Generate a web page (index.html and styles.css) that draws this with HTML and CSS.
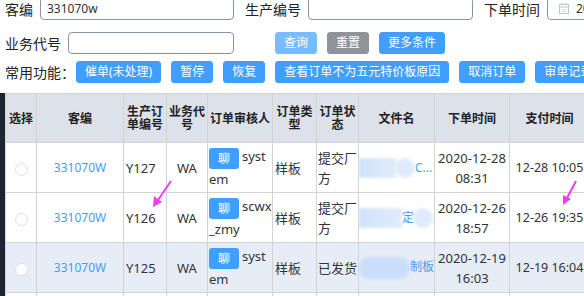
FILE: index.html
```html
<!DOCTYPE html>
<html lang="zh-CN">
<head>
    <meta charset="UTF-8">
    <title>订单列表</title>
    <link rel="stylesheet" href="styles.css">
</head>
<body>
    <div class="filters">
        <div class="filter-row first">
            <label class="f-label">客编</label>
            <input class="f-input w-code" value="331070w">
            <label class="f-label">生产编号</label>
            <input class="f-input w-prod">
            <label class="f-label">下单时间</label>
            <div class="f-date">
                <svg class="cal" width="10" height="11" viewBox="0 0 10 11">
                    <rect x="0.5" y="1.5" width="9" height="9" fill="none" stroke="#c0c4cc"/>
                    <line x1="0.5" y1="4" x2="9.5" y2="4" stroke="#c0c4cc"/>
                    <line x1="3" y1="0" x2="3" y2="2" stroke="#c0c4cc"/>
                    <line x1="7" y1="0" x2="7" y2="2" stroke="#c0c4cc"/>
                    <line x1="2.5" y1="6.5" x2="7.5" y2="6.5" stroke="#dcdfe6"/>
                    <line x1="2.5" y1="8.5" x2="7.5" y2="8.5" stroke="#dcdfe6"/>
                </svg>
                <span>2020-12-01</span>
            </div>
        </div>
        <div class="filter-row">
            <label class="f-label">业务代号</label>
            <input class="f-input w-biz">
            <div class="btn-group search">
                <button class="btn light">查询</button>
                <button class="btn gray">重置</button>
                <button class="btn">更多条件</button>
            </div>
        </div>
        <div class="filter-row">
            <label class="f-label tools">常用功能：</label>
            <div class="btn-group">
                <button class="btn">催单(未处理)</button>
                <button class="btn">暂停</button>
                <button class="btn">恢复</button>
                <button class="btn">查看订单不为五元特价板原因</button>
                <button class="btn">取消订单</button>
                <button class="btn">审单记录</button>
            </div>
        </div>
    </div>

    <div class="table-wrap">
        <table class="grid">
            <colgroup>
                <col style="width:31px">
                <col style="width:87px">
                <col style="width:43px">
                <col style="width:41px">
                <col style="width:65px">
                <col style="width:44px">
                <col style="width:42px">
                <col style="width:76px">
                <col style="width:75px">
                <col style="width:80px">
            </colgroup>
            <thead>
                <tr>
                    <th>选择</th>
                    <th>客编</th>
                    <th>生产订单编号</th>
                    <th>业务代号</th>
                    <th>订单审核人</th>
                    <th>订单类型</th>
                    <th>订单状态</th>
                    <th>文件名</th>
                    <th>下单时间</th>
                    <th>支付时间</th>
                </tr>
            </thead>
            <tbody>
                <tr>
                    <td class="c"><span class="radio"></span></td>
                    <td class="c"><a class="link">331070W</a></td>
                    <td>Y127</td>
                    <td class="c">WA</td>
                    <td class="checker"><button class="chat">聊</button>system</td>
                    <td>样板</td>
                    <td class="status">提交厂方</td>
                    <td class="fname">
                        <span class="blob" style="width:37px"></span><span class="blob round"></span><a class="link">C...</a>
                    </td>
                    <td class="c">2020-12-28<br>08:31</td>
                    <td class="c pay">12-28 10:05</td>
                </tr>
                <tr>
                    <td class="c"><span class="radio"></span></td>
                    <td class="c"><a class="link">331070W</a></td>
                    <td>Y126</td>
                    <td class="c">WA</td>
                    <td class="checker"><button class="chat">聊</button>scwx_zmy</td>
                    <td>样板</td>
                    <td class="status">提交厂方</td>
                    <td class="fname">
                        <span class="blob" style="width:43px"></span><a class="link">定</a><span class="blob round"></span><a class="link">反</a>
                    </td>
                    <td class="c">2020-12-26<br>18:57</td>
                    <td class="c pay">12-26 19:35</td>
                </tr>
                <tr class="hover">
                    <td class="c"><span class="radio"></span></td>
                    <td class="c"><a class="link">331070W</a></td>
                    <td>Y125</td>
                    <td class="c">WA</td>
                    <td class="checker"><button class="chat">聊</button>system</td>
                    <td>样板</td>
                    <td class="status">已发货</td>
                    <td class="fname">
                        <span class="blob wide" style="width:51px"></span><a class="link">制板</a>
                    </td>
                    <td class="c">2020-12-19<br>16:03</td>
                    <td class="c pay">12-19 16:04</td>
                </tr>
                <tr>
                    <td></td><td></td><td></td><td></td>
                    <td class="checker"><button class="chat">聊</button></td>
                    <td></td><td></td><td></td><td></td><td></td>
                </tr>
            </tbody>
        </table>
    </div>

    <svg class="marks" width="584" height="296" viewBox="0 0 584 296">
        <line x1="171" y1="181" x2="158" y2="200" stroke="#f53cf0" stroke-width="2"/>
        <polygon points="153,207 162,202 154,196" fill="#f53cf0"/>
        <line x1="576" y1="181" x2="567" y2="198" stroke="#f53cf0" stroke-width="2"/>
        <polygon points="563,205 571,199 563,195" fill="#f53cf0"/>
    </svg>
</body>
</html>
```

FILE: styles.css
```css
body {
    margin: 0;
    font-family: "Noto Sans", "Noto Sans CJK SC", sans-serif;
    color: #333;
    overflow: hidden;
    position: relative;
    height: 296px;
}
.filters {
    padding-left: 5px;
    margin-top: -3px;
}
.filter-row {
    display: flex;
    align-items: center;
    height: 22px;
    margin-top: 7px;
    white-space: nowrap;
}
.filter-row > * {
    flex-shrink: 0;
}
.filter-row.first {
    height: 23px;
    margin-top: 0;
    margin-bottom: 12px;
}
.f-label {
    font-size: 14px;
    color: #222;
    margin-right: 7px;
}
.f-label.tools {
    margin-right: 1px;
}
.f-input {
    height: 100%;
    box-sizing: border-box;
    border: 1px solid #8a92a6;
    border-radius: 4px;
    padding: 0 6px;
    font-family: inherit;
    font-size: 12px;
    color: #333;
    margin-right: 11px;
    outline: none;
}
.w-code { width: 194px; }
.w-prod { width: 165px; }
.w-biz { width: 166px; }
.f-date {
    height: 100%;
    box-sizing: border-box;
    width: 120px;
    border: 1px solid #8a92a6;
    border-radius: 4px;
    display: flex;
    align-items: center;
    padding-left: 11px;
    font-size: 12px;
    gap: 7px;
}
.btn-group {
    display: flex;
    gap: 10px;
    height: 100%;
}
.btn-group > * {
    flex-shrink: 0;
}
.btn-group.search {
    margin-left: 30px;
}
.btn {
    height: 100%;
    padding: 0 8px;
    border: 1px solid #409eff;
    border-radius: 3px;
    background-color: #409eff;
    color: white;
    font-family: inherit;
    font-size: 12px;
    line-height: 1;
    cursor: pointer;
}
.btn.light {
    background-color: #79bbff;
    border-color: #79bbff;
}
.btn.gray {
    background-color: #909399;
    border-color: #909399;
}
.table-wrap {
    margin-top: 10px;
    border-left: 5px solid #1e2431;
    height: 300px;
}
.grid {
    border-collapse: collapse;
    table-layout: fixed;
    width: 584px;
}
.grid th, .grid td {
    border: 1px solid #d3d3d3;
}
.grid thead tr {
    height: 49px;
}
.grid tbody tr {
    height: 50px;
}
.grid th {
    background-color: #dde1ea;
    font-size: 12px;
    line-height: 13px;
    font-weight: bold;
    color: #222;
    padding: 0 1px;
}
.grid td {
    font-size: 13px;
    line-height: 20px;
    padding: 0 2px;
    vertical-align: middle;
    overflow: hidden;
}
.grid tr.hover td {
    background-color: #e6edf7;
}
.grid td.c {
    text-align: center;
}
.grid td.pay {
    font-size: 12.5px;
    white-space: nowrap;
}
.grid td.status {
    padding: 0 0 0 1px;
}
.grid td.checker {
    padding: 0 0 0 1px;
    word-break: break-all;
}
.radio {
    display: inline-block;
    width: 13px;
    height: 13px;
    box-sizing: border-box;
    border: 1px solid #dcdfe6;
    border-radius: 50%;
    background-color: white;
    vertical-align: middle;
}
.link {
    color: #4a9cf0;
    font-size: 12px;
}
.chat {
    width: 30px;
    height: 21px;
    border: none;
    border-radius: 3px;
    background-color: #409eff;
    color: white;
    font-family: inherit;
    font-size: 12px;
    vertical-align: middle;
    margin-right: 3px;
    padding: 0;
}
.grid td.fname {
    padding: 0;
    white-space: nowrap;
}
.blob {
    display: inline-block;
    height: 20px;
    vertical-align: middle;
    background: linear-gradient(90deg, #cfe3fb, #e1ecfb);
    filter: blur(1.5px);
}
.blob.round {
    width: 20px;
    border-radius: 50%;
    background: #dfebfb;
    margin-left: -1px;
}
.blob.wide {
    height: 22px;
    border-radius: 11px;
    background: #cadefa;
}
.marks {
    position: absolute;
    left: 0;
    top: 0;
    pointer-events: none;
}
```
